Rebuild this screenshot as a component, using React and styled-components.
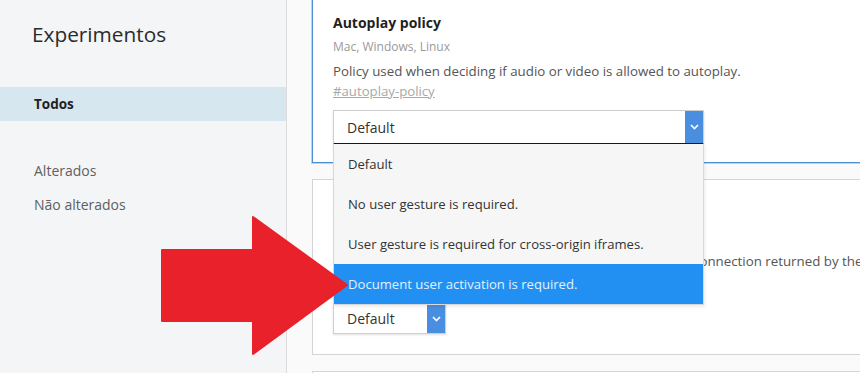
import styled, { createGlobalStyle } from "styled-components";

const GlobalStyle = createGlobalStyle`
  html, body {
    margin: 0;
    padding: 0;
    overflow: hidden;
    background: #fafafa;
  }

  body {
    font-family: "Open Sans", "Noto Sans", sans-serif;
    color: #333;
  }
`;

const ChevronIcon = () => (
  <svg width="9" height="6" viewBox="0 0 9 6">
    <path d="M1 1l3.5 3.5L8 1" fill="none" stroke="#fff" strokeWidth="1.6" />
  </svg>
);

const Select = ({ value, small, children }) => (
  <SelectBox $small={small}>
    <SelectValue>{value}</SelectValue>
    <SelectButton>
      <ChevronIcon />
    </SelectButton>
    {children}
  </SelectBox>
);

const App = () => {
  const options = [
    "Default",
    "No user gesture is required.",
    "User gesture is required for cross-origin iframes.",
    "Document user activation is required.",
  ];

  return (
    <Page>
      <GlobalStyle />
      <Sidebar>
        <SidebarTitle>Experimentos</SidebarTitle>
        <NavList>
          <NavItem $active>Todos</NavItem>
          <NavSpacer />
          <NavItem>Alterados</NavItem>
          <NavItem>Não alterados</NavItem>
        </NavList>
      </Sidebar>
      <Main>
        <Card $focused>
          <FlagTitle>Autoplay policy</FlagTitle>
          <Platforms>Mac, Windows, Linux</Platforms>
          <Description>
            Policy used when deciding if audio or video is allowed to autoplay.
          </Description>
          <Permalink>#autoplay-policy</Permalink>
          <Select value="Default">
            <OptionList>
              {options.map((option, index) => (
                <Option key={option} $selected={index === 3}>
                  {option}
                </Option>
              ))}
            </OptionList>
          </Select>
        </Card>
        <Card>
          <FlagTitle>(Network Information) Downlink Max</FlagTitle>
          <Platforms>Mac, Windows, Linux</Platforms>
          <Description>
            Enables the experimental downLinkMax attributes for the connection returned by the browser.
          </Description>
          <Select value="Default" small />
        </Card>
        <Card />
      </Main>
      <Arrow width="360" height="373" viewBox="0 0 360 373">
        <polygon
          points="162,250 253,250 253,217 347,285 253,354 253,321 162,321"
          fill="#e8212a"
          stroke="#e8212a"
          strokeWidth="2"
          strokeLinejoin="round"
        />
      </Arrow>
    </Page>
  );
};

const Page = styled.div`
  position: relative;
  display: flex;
  width: 860px;
  height: 373px;
  overflow: hidden;
`;

const Sidebar = styled.aside`
  flex: 0 0 286px;
  background: #f4f5f6;
  border-right: 1px solid #dcdcdc;
  padding-top: 20px;
`;

const SidebarTitle = styled.h1`
  margin: 0 0 0 32px;
  font-size: 20.8px;
  font-weight: 400;
  color: #2b2b2b;
  line-height: 28px;
`;

const NavList = styled.nav`
  display: flex;
  flex-direction: column;
  margin-top: 39px;
`;

const NavItem = styled.div`
  height: 34px;
  line-height: 34px;
  padding-left: 34px;
  font-size: ${(p) => (p.$active ? "13.5px" : "14px")};
  font-weight: ${(p) => (p.$active ? 700 : 400)};
  color: ${(p) => (p.$active ? "#222" : "#5f5f5f")};
  background: ${(p) => (p.$active ? "#d6e7f0" : "transparent")};
`;

const NavSpacer = styled.div`
  height: 33px;
`;

const Main = styled.main`
  flex: 1;
  display: flex;
  flex-direction: column;
  gap: 16px;
  margin-top: -11px;
  padding-left: 25px;
  min-width: 0;
`;

const Card = styled.section`
  flex-shrink: 0;
  position: relative;
  background: #fff;
  border: 1px solid ${(p) => (p.$focused ? "#4d8fd6" : "#d4d4d4")};
  border-right: none;
  box-shadow: ${(p) => (p.$focused ? "0 0 0 1px #b9d4f0" : "none")};
  padding: 22px 0 ${(p) => (p.$focused ? "17px" : "20px")} 20px;
  z-index: ${(p) => (p.$focused ? 2 : 1)};
  min-height: 20px;
  overflow: visible;
`;

const FlagTitle = styled.h2`
  margin: 0;
  font-size: 14px;
  font-weight: 700;
  color: #1f1f1f;
  line-height: 22px;
`;

const Platforms = styled.div`
  font-size: 12px;
  color: #9a9a9a;
  line-height: 22px;
  margin-top: 2px;
`;

const Description = styled.p`
  margin: 0;
  font-size: 13.3px;
  color: #555;
  line-height: 22px;
  white-space: nowrap;
  margin-top: 2px;
`;

const Permalink = styled.a`
  display: block;
  font-size: 13.2px;
  color: #a8a8a8;
  line-height: 18px;
  text-decoration: underline;
`;

const SelectBox = styled.div`
  position: relative;
  display: flex;
  width: ${(p) => (p.$small ? "113px" : "371px")};
  height: ${(p) => (p.$small ? "31px" : "35px")};
  margin-top: ${(p) => (p.$small ? "31px" : "10px")};
  border: 1px solid #cfcfcf;
  border-bottom: ${(p) => (p.$small ? "1px solid #cfcfcf" : "2px solid #1a1a1a")};
  box-shadow: 0 1px 2px rgba(0, 0, 0, 0.12);
  background: #fff;
  box-sizing: border-box;
`;

const SelectValue = styled.div`
  flex: 1;
  display: flex;
  align-items: center;
  padding-left: 13px;
  font-size: 14px;
  color: #333;
`;

const SelectButton = styled.div`
  width: 18px;
  display: flex;
  align-items: center;
  justify-content: center;
  background: #4a8fdf;
`;

const OptionList = styled.ul`
  position: absolute;
  top: calc(100% + 1px);
  left: -1px;
  margin: 0;
  padding: 0;
  width: 371px;
  list-style: none;
  background: #f6f6f6;
  border: 1px solid #d8d8d8;
  border-top: none;
  box-sizing: border-box;
  box-shadow: 1px 2px 3px rgba(0, 0, 0, 0.08);
  z-index: 5;
`;

const Option = styled.li`
  height: 40px;
  line-height: 40px;
  padding-left: 14px;
  font-size: 13.1px;
  color: ${(p) => (p.$selected ? "#e3f1ff" : "#333")};
  background: ${(p) => (p.$selected ? "#2190f2" : "transparent")};
  white-space: nowrap;
`;

const Arrow = styled.svg`
  position: absolute;
  top: 0;
  left: 0;
  z-index: 10;
  pointer-events: none;
`;

export default App;
